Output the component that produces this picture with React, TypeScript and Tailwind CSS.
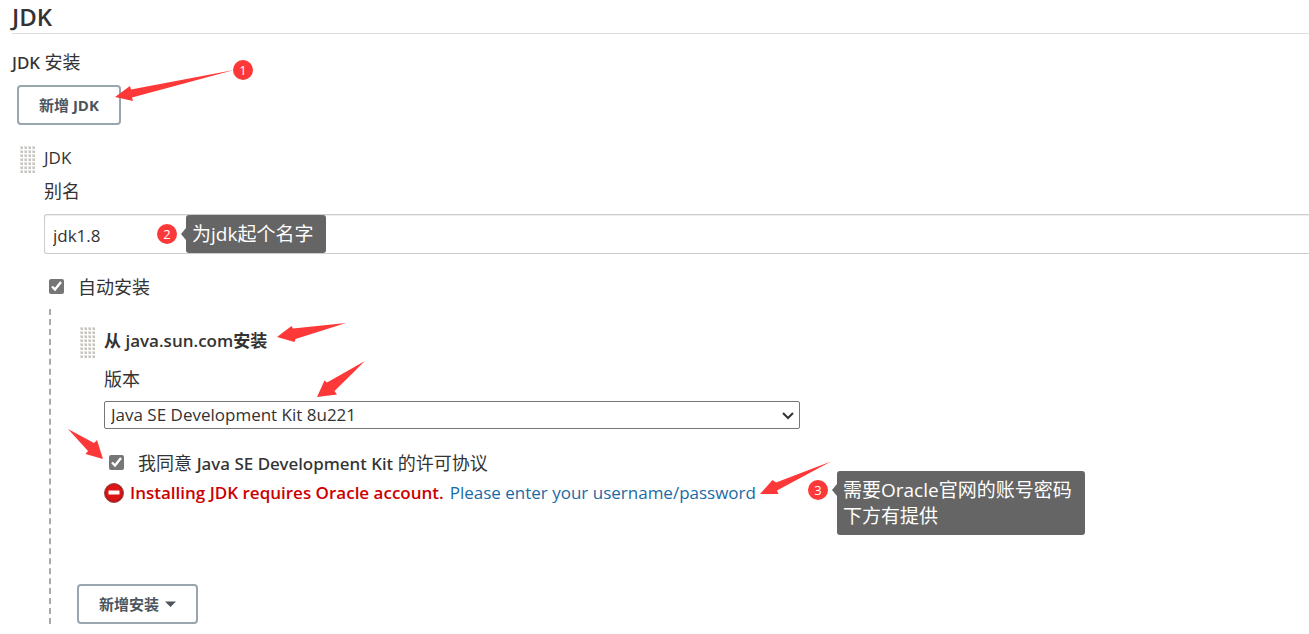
import React from 'react';

type Point = { x: number; y: number };

function Grip({ rows }: { rows: number }) {
  const dots: Point[] = [];
  for (let r = 0; r < rows; r++) {
    for (let c = 0; c < 4; c++) dots.push({ x: c * 4, y: r * 4 });
  }
  return (
    <svg width="15" height={rows * 4} aria-hidden="true" className="block shrink-0">
      {dots.map((d) => (
        <g key={`${d.x}-${d.y}`}>
          <rect x={d.x} y={d.y} width="3" height="3" fill="#e3e1de" />
          <rect x={d.x + 1} y={d.y + 1} width="2" height="2" fill="#c6c4c0" />
        </g>
      ))}
    </svg>
  );
}

function Badge({ n, className }: { n: number; className: string }) {
  return (
    <span
      className={`absolute flex size-5 items-center justify-center rounded-full bg-[#fd3838] text-[13px] leading-5 text-white ${className}`}
    >
      {n}
    </span>
  );
}

function Note({ className, children }: { className: string; children: React.ReactNode }) {
  return (
    <div className={`absolute rounded-[3px] bg-[#656565] py-1.5 pr-[13px] pl-1.5 text-[19px] leading-[26px] whitespace-nowrap text-white ${className}`}>
      <svg width="5" height="12" viewBox="0 0 5 12" className="absolute top-[13px] -left-[5px]" aria-hidden="true">
        <path d="M5 0L0 6l5 6z" fill="#656565" />
      </svg>
      {children}
    </div>
  );
}

function Arrows() {
  return (
    <svg width="860" height="520" viewBox="0 0 860 520" className="pointer-events-none absolute top-0 left-0" fill="#fd3838" aria-hidden="true">
      <path d="M234 70L131 89.500L130 86L115 97L133 101L132 97.500Z" />
      <path d="M346 323L293 328.500L291.500 326L277 337L294.500 342L295.500 339Z" />
      <path d="M365 361L327 382.500L324.500 380.500L317 397L337 394.500L334.500 391Z" />
      <path d="M68 429L94 443L97 440L103 459L85.500 454L88 451Z" />
      <path d="M831 461.500L776 482.500L772.500 480L760 494L778.500 494L777 490.500Z" />
    </svg>
  );
}

export default function App() {
  return (
    <main className="relative overflow-hidden bg-white pb-[10px] pl-3 font-['Open_Sans','Noto_Sans_CJK_SC',sans-serif] text-[17px] leading-6 text-[#333]">
      <h1 className="h-[34px] border-b border-[#ddd] text-[24px] leading-[33px] font-semibold">JDK</h1>
      <h2 className="mt-4 h-6">
        <span className="font-['Noto_Sans',sans-serif] font-medium">JDK</span> <span className="text-[18px]">安装</span>
      </h2>
      <button type="button" className="mt-[11px] ml-[5px] block h-10 rounded-[4px] border-2 border-[#98a6ae] px-5 text-[15px] leading-5 font-bold text-[#4d545d]">
        新增 JDK
      </button>

      <section className="mt-[21px] flex gap-[9px] pl-2">
        <Grip rows={7} />
        <div className="min-w-0 flex-1">
          <h3>JDK</h3>
          <label htmlFor="jdk-name" className="mt-[9px] block text-[18px]">别名</label>
          <div className="relative mt-[11px]">
            <input id="jdk-name" defaultValue="jdk1.8" className="block h-10 w-full rounded-l-[3px] border border-r-0 border-[#ccc] px-2 pt-[2px] shadow-[inset_0_1px_1px_rgba(0,0,0,0.075)] outline-none" />
            <Badge n={2} className="top-[10px] left-[113px]" />
            <Note className="top-px left-[142px]">为jdk起个名字</Note>
          </div>

          <label className="mt-[21px] flex items-center gap-[14px] pl-[5px] text-[18px]">
            <input type="checkbox" defaultChecked className="mb-[2px] size-[15px] accent-[#767676]" />
            自动安装
          </label>

          <div className="mt-[10px] ml-[5px] border-l-2 border-dashed border-[#aaa] pl-[26px]">
            <div className="flex gap-[9px] pt-[18px] pl-[3px]">
              <Grip rows={8} />
              <div className="min-w-0 flex-1">
                <h4 className="mt-[2px] font-semibold">从 java.sun.com安装</h4>
                <label htmlFor="jdk-version" className="mt-[14px] block text-[18px]">版本</label>
                <div className="relative mt-[10px] max-w-[696px]">
                  <select id="jdk-version" className="block h-7 w-full appearance-none rounded-[2px] border border-[#767676] bg-white pl-[6px]">
                    <option>Java SE Development Kit 8u221</option>
                  </select>
                  <svg width="12" height="8" viewBox="0 0 12 8" className="pointer-events-none absolute top-[11px] right-[6px]" fill="none" stroke="#333" strokeWidth="2" aria-hidden="true">
                    <path d="M1 1l5 5l5-5" />
                  </svg>
                </div>
                <label className="mt-[22px] flex h-6 items-center gap-[14px] pl-[5px]">
                  <input type="checkbox" defaultChecked className="mb-[2px] size-[15px] accent-[#767676]" />
                  <span className="text-[18px]">
                    我同意 <span className="font-['Noto_Sans',sans-serif] text-[17px] font-medium">Java SE Development Kit</span> 的许可协议
                  </span>
                </label>
                <p className="mt-[6px] flex items-center gap-[6px] whitespace-nowrap">
                  <svg width="20" height="20" viewBox="0 0 20 20" aria-hidden="true">
                    <circle cx="10" cy="10" r="9.500" fill="#b91414" stroke="#9b4a4a" />
                    <circle cx="10" cy="9.500" r="8" fill="#dc1515" />
                    <rect x="4.500" y="7.500" width="11" height="4" rx="0.500" fill="#fff" />
                  </svg>
                  <strong className="font-semibold text-[#c00]">Installing JDK requires Oracle account.</strong>
                  <a href="#credentials" className="text-[#1b6aa5]">Please enter your username/password</a>
                </p>
              </div>
            </div>
            <button type="button" className="mt-[79px] flex h-10 items-center gap-[6px] rounded-[4px] border-2 border-[#98a6ae] px-5 text-[15px] leading-5 font-bold text-[#4d545d]">
              新增安装
              <svg width="11" height="6" viewBox="0 0 11 6" aria-hidden="true">
                <path d="M0 0.500h11L5.500 6z" fill="#4d545d" />
              </svg>
            </button>
          </div>
        </div>
      </section>

      <Arrows />
      <Badge n={1} className="top-[60px] left-[233px]" />
      <Badge n={3} className="top-[480px] left-[808px]" />
      <Note className="top-[471px] left-[837px]">
        需要Oracle官网的账号密码
        <br />
        下方有提供
      </Note>
    </main>
  );
}
